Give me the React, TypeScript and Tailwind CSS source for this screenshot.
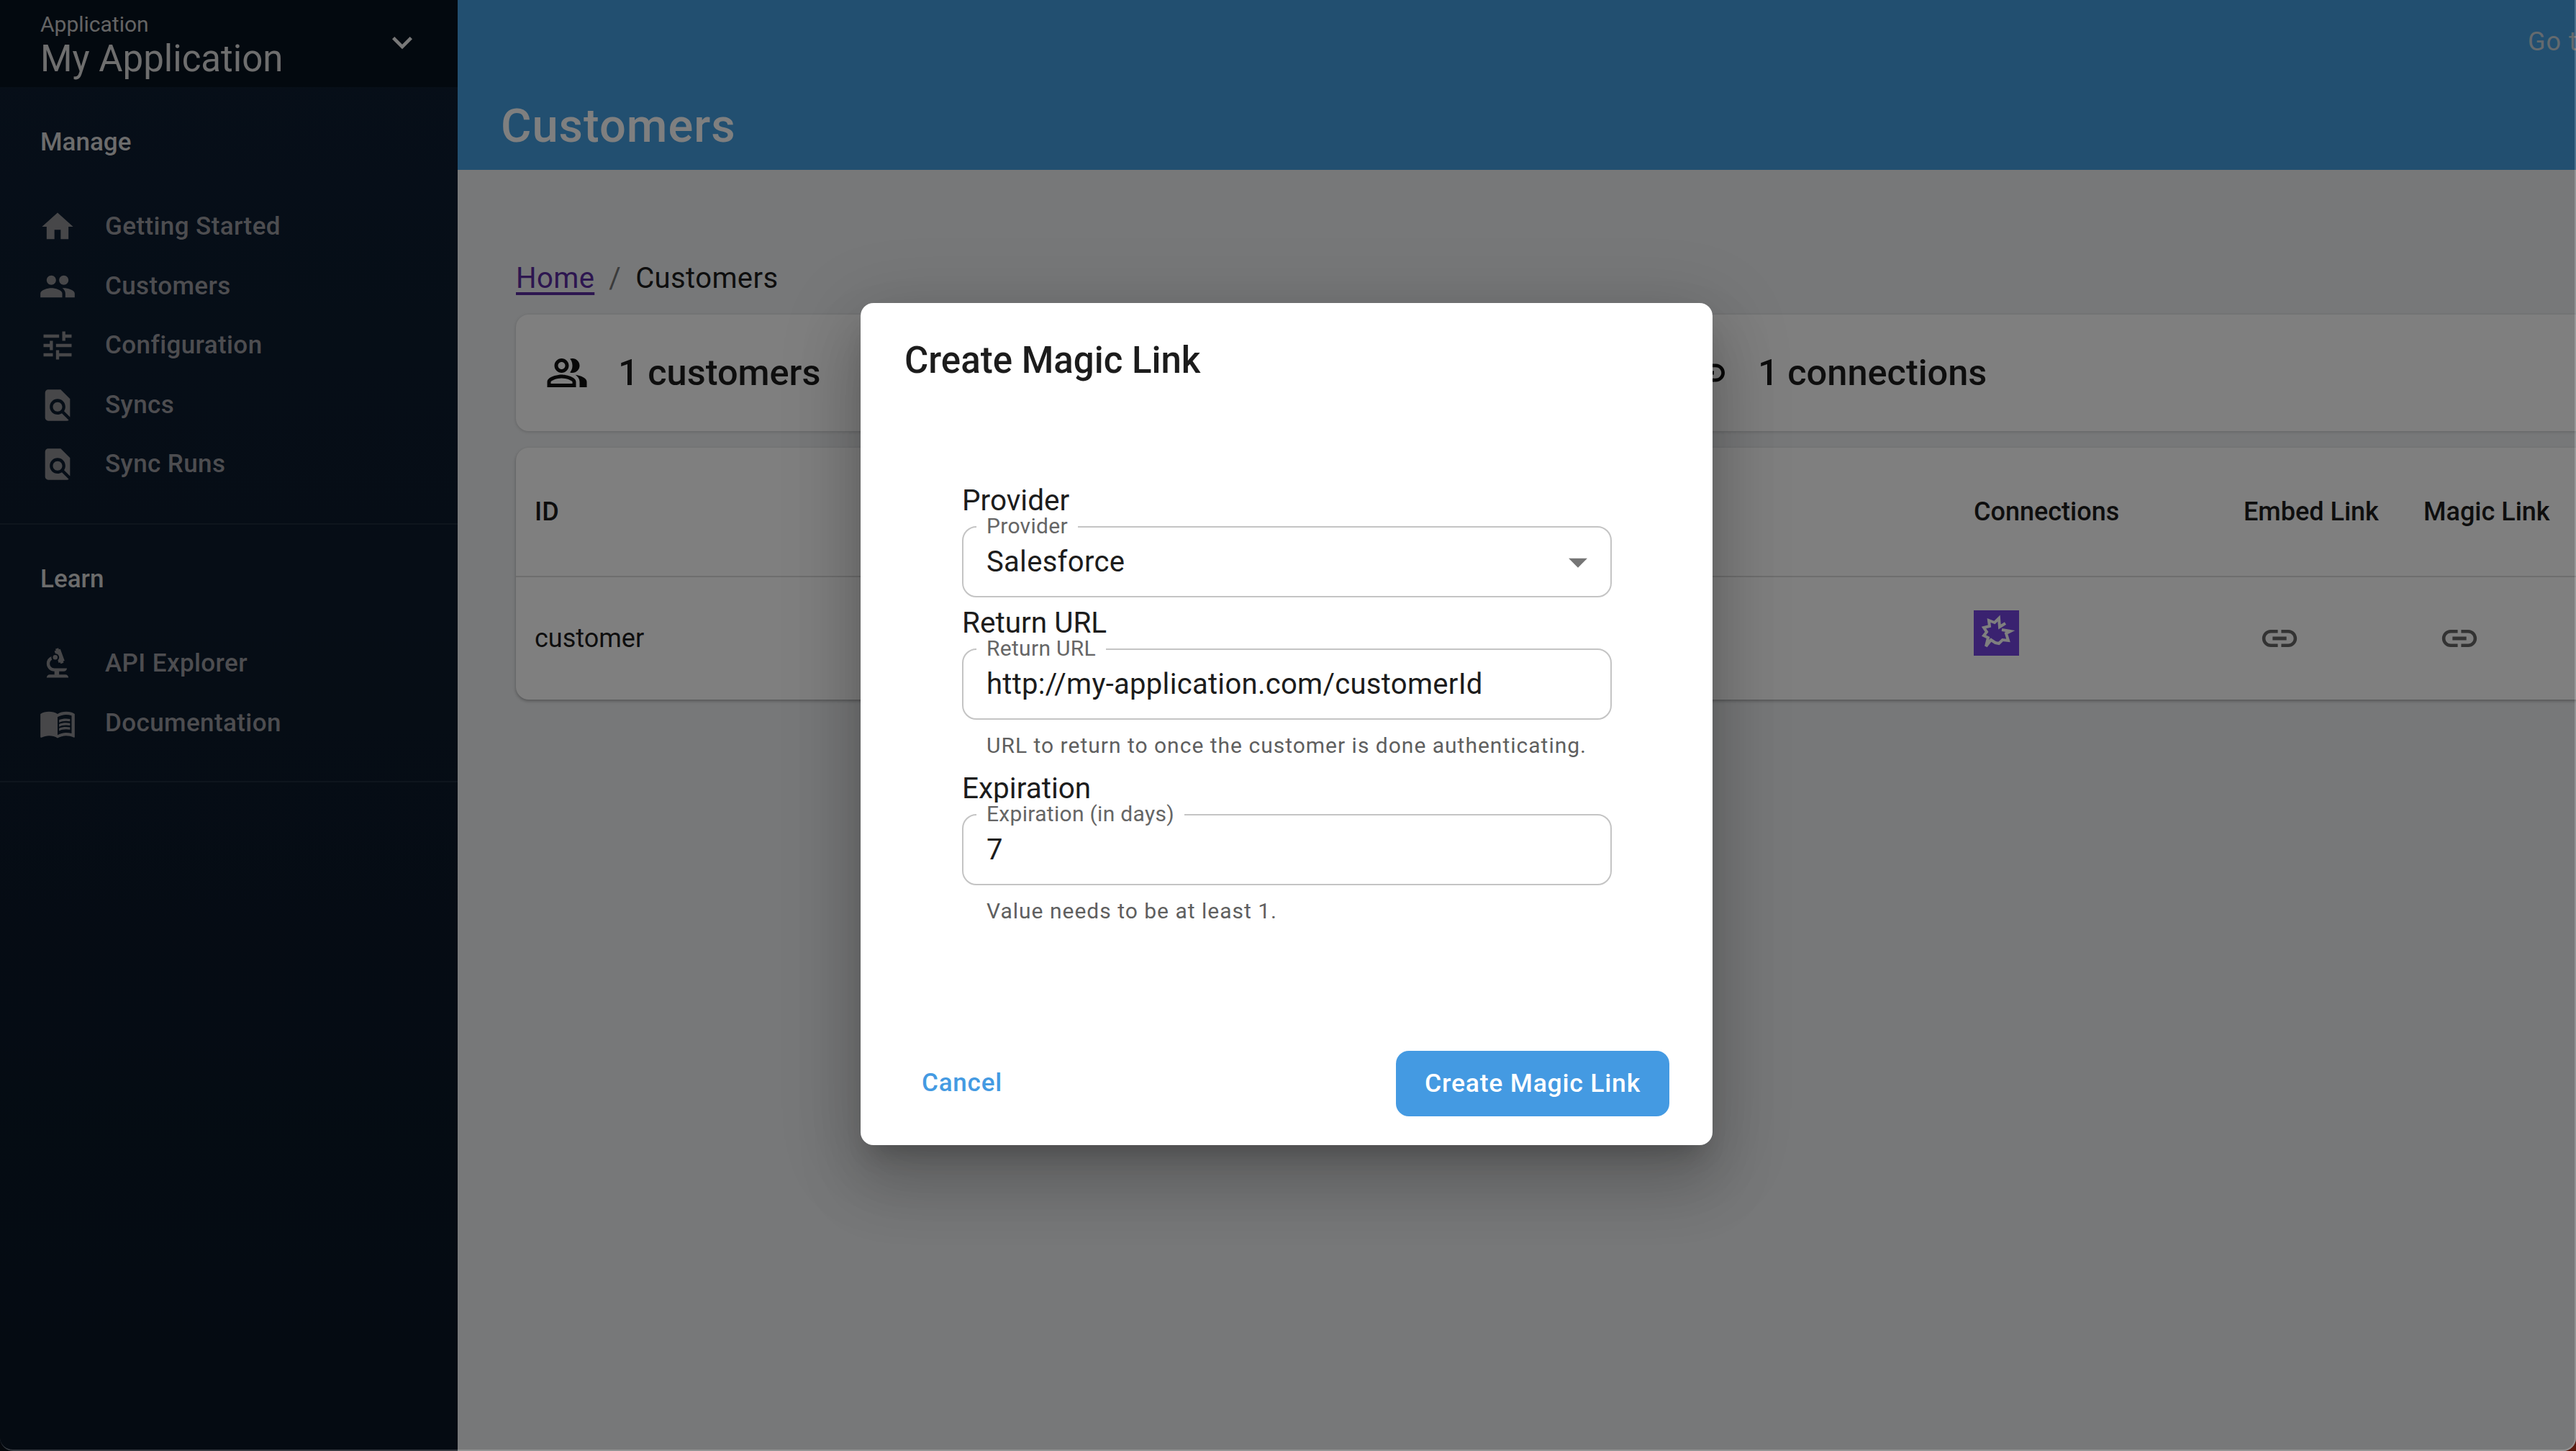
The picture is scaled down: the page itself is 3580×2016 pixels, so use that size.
import type { ReactNode } from "react";
import {
  MdArrowDropDown,
  MdBiotech,
  MdExpandMore,
  MdFindInPage,
  MdGroup,
  MdHome,
  MdLink,
  MdMenuBook,
  MdOutlinePeopleAlt,
  MdTune,
} from "react-icons/md";

const manageItems = [
  { label: "Getting Started", icon: <MdHome /> },
  { label: "Customers", icon: <MdGroup /> },
  { label: "Configuration", icon: <MdTune /> },
  { label: "Syncs", icon: <MdFindInPage /> },
  { label: "Sync Runs", icon: <MdFindInPage /> },
];

const learnItems = [
  { label: "API Explorer", icon: <MdBiotech /> },
  { label: "Documentation", icon: <MdMenuBook /> },
];

function NavItem({ label, icon }: { label: string; icon: ReactNode }) {
  return (
    <div className="flex h-[82.5px] items-center pl-[54px]">
      <span className="flex w-[92px] text-[52px] text-[#8e8e93]">{icon}</span>
      <span className="text-[35px] font-medium tracking-[0.4px] text-[#9b9ba0]">{label}</span>
    </div>
  );
}

function SectionTitle({ children }: { children: ReactNode }) {
  return <div className="flex h-[151px] items-center pl-[56px] text-[35px] font-medium text-[#d8d8d8]">{children}</div>;
}

function Sidebar() {
  return (
    <aside className="flex h-full w-[636px] shrink-0 flex-col bg-gradient-to-b from-[#0e1e32] to-[#0a1624]">
      <div className="relative h-[121px] shrink-0 bg-[#06121e] pl-[56px] pt-[16px]">
        <div className="text-[30px] leading-[36px] text-[#c8c8c8]">Application</div>
        <div className="text-[51px] leading-[60px] text-[#dcdcdc]">My Application</div>
        <MdExpandMore className="absolute left-[531px] top-[31px] text-[56px] text-[#f0f0f0]" />
      </div>
      <div className="h-[608px] shrink-0 border-b-2 border-[#1c2a3b] pt-[2px]">
        <SectionTitle>Manage</SectionTitle>
        {manageItems.map((item) => (
          <NavItem key={item.label} {...item} />
        ))}
      </div>
      <div className="h-[358px] shrink-0 border-b-2 border-[#1c2a3b] pt-[1px]">
        <SectionTitle>Learn</SectionTitle>
        {learnItems.map((item) => (
          <NavItem key={item.label} {...item} />
        ))}
      </div>
    </aside>
  );
}

function StatCard({ icon, text, className }: { icon: ReactNode; text: string; className: string }) {
  return (
    <div className={`flex h-[162px] shrink-0 items-center rounded-[18px] bg-white pl-[41px] shadow-[0_1px_4px_rgba(0,0,0,0.18)] ${className}`}>
      <span className="flex w-[101px] text-[60px] text-[#111]">{icon}</span>
      <span className="text-[50.5px] font-medium text-[#1c1c1c]">{text}</span>
    </div>
  );
}

function CustomersPage() {
  return (
    <main className="flex h-full min-w-0 flex-1 flex-col overflow-hidden bg-[#eef0f2]">
      <header className="relative h-[236px] shrink-0 bg-[#449fe0] pl-[60px] pt-[135px]">
        <h1 className="text-[65px] font-medium leading-[80px] tracking-[1px] text-white">Customers</h1>
        <span className="absolute left-[2877px] top-[36px] whitespace-nowrap text-[36px] leading-[44px] tracking-[1px] text-[#c9d4dc]">
          Go to
        </span>
      </header>
      <div className="w-[3100px] pl-[81px] pt-[128px]">
        <nav className="flex h-[46px] items-center text-[40px] tracking-[0.4px] text-[#1c1c1c]">
          <span className="text-[#5a2ca0] underline underline-offset-[6px]">Home</span>
          <span className="mx-[20px] text-[#777]">/</span>
          <span>Customers</span>
        </nav>
        <div className="mt-[27px] flex gap-[50px]">
          <StatCard icon={<MdOutlinePeopleAlt />} text="1 customers" className="w-[1534px]" />
          <StatCard icon={<MdLink />} text="1 connections" className="w-[1400px]" />
        </div>
        <div className="mt-[23px] h-[350px] rounded-[18px] bg-white shadow-[0_2px_4px_rgba(0,0,0,0.3)]">
          <div className="grid h-[180px] grid-cols-[2001px_375px_249px_1fr] items-center border-b-2 border-[#dcdcdc] text-[36px] font-medium text-[#1c1c1c]">
            <span className="pl-[26px]">ID</span>
            <span className="pl-[25px]">Connections</span>
            <span className="pl-[25px]">Embed Link</span>
            <span className="pl-[26px]">Magic Link</span>
          </div>
          <div className="grid h-[170px] grid-cols-[2001px_375px_249px_1fr] items-center text-[36px] text-[#1c1c1c]">
            <span className="pl-[26px]">customer</span>
            <span className="pl-[25px]">
              <svg viewBox="0 0 63 63" className="-mt-[15px] h-[63px] w-[63px]">
                <rect width="63" height="63" fill="#7444e0" />
                <polyline
                  points="44,18 36,23 35,11 29,17 21,14 22,22 14,24 18,30 14,35 20,38 17,50 24,41 30,45 35,46 40,41 48,42 45,32 51,29 39,27"
                  fill="none"
                  stroke="#ffffff"
                  strokeWidth="4"
                />
              </svg>
            </span>
            <span className="flex pl-[46px] text-[58px] text-[#666]"><MdLink /></span>
            <span className="flex pl-[47px] text-[58px] text-[#666]"><MdLink /></span>
          </div>
        </div>
      </div>
    </main>
  );
}

function OutlinedField({ title, legend, value, helper, select }: { title: string; legend: string; value: string; helper?: string; select?: boolean }) {
  return (
    <div className="w-[903px]">
      <div className="h-[47px] text-[40.5px] leading-[47px] text-[#1c1c1c]">{title}</div>
      <div className="relative mt-[12px] h-[99px] rounded-[20px] border-2 border-[#c4c4c4]">
        <span className="absolute left-[18px] top-[-18px] bg-white px-[14px] text-[30px] leading-[32px] tracking-[0.3px] text-[#666]">{legend}</span>
        <div className="flex h-full items-center pl-[32px] text-[40px] tracking-[0.3px] text-[#1c1c1c]">{value}</div>
        {select && <MdArrowDropDown className="absolute right-[14px] top-[17px] text-[62px] text-[#757575]" />}
      </div>
      {helper && <div className="mt-[18px] h-[36px] pl-[34px] text-[30px] leading-[36px] tracking-[1px] text-[#5f5f5f]">{helper}</div>}
    </div>
  );
}

function MagicLinkDialog() {
  return (
    <div className="absolute inset-0 bg-black/50 pl-[1196px] pt-[421px]">
      <div className="flex h-[1170px] w-[1184px] flex-col rounded-[18px] bg-white shadow-[0_25px_34px_-16px_rgba(0,0,0,0.2),0_54px_86px_7px_rgba(0,0,0,0.14),0_20px_104px_18px_rgba(0,0,0,0.12)]">
        <h2 className="pl-[61px] pt-[50px] text-[51px] font-medium leading-[60px] text-[#1c1c1c]">Create Magic Link</h2>
        <div className="flex flex-1 flex-col gap-[12px] pl-[141px] pt-[141px]">
          <OutlinedField title="Provider" legend="Provider" value="Salesforce" select />
          <OutlinedField title="Return URL" legend="Return URL" value="http://my-application.com/customerId" helper="URL to return to once the customer is done authenticating." />
          <div className="mt-[6px]">
            <OutlinedField title="Expiration" legend="Expiration (in days)" value="7" helper="Value needs to be at least 1." />
          </div>
        </div>
        <div className="flex items-center justify-between pb-[40px] pl-[85px] pr-[60px]">
          <span className="text-[35px] font-medium tracking-[0.8px] text-[#449ae2]">Cancel</span>
          <span className="flex h-[91px] w-[380px] items-center justify-center rounded-[18px] bg-[#449ae2] text-[35.5px] font-medium tracking-[0.8px] text-white">
            Create Magic Link
          </span>
        </div>
      </div>
    </div>
  );
}

export default function App() {
  return (
    <div className="h-[2016px] w-[3580px] overflow-hidden bg-[linear-gradient(90deg,#05080c_50%,#5a1a10_50%)] font-['Roboto',sans-serif]">
      <div className="relative flex h-full w-full overflow-hidden rounded-b-[18px]">
        <Sidebar />
        <CustomersPage />
        <MagicLinkDialog />
        {/* window edge of the desktop capture */}
        <div className="pointer-events-none absolute inset-0 rounded-b-[18px] border-r-2 border-b-2 border-white/20" />
      </div>
    </div>
  );
}
